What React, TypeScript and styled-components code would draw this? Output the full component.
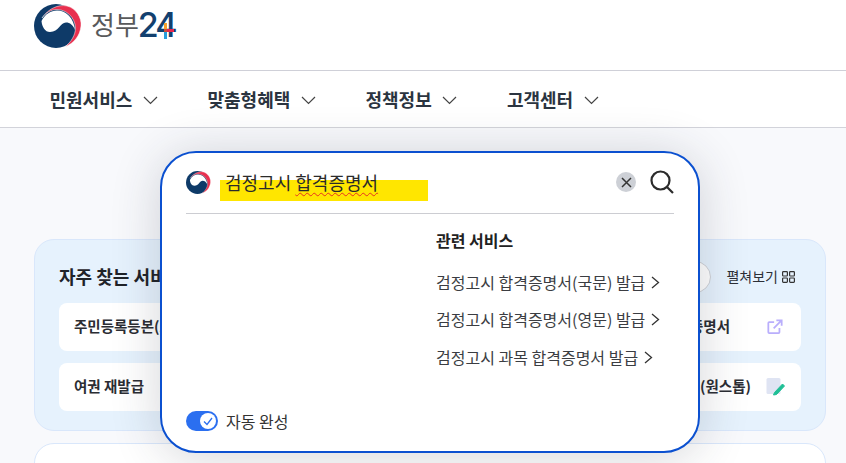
import React from 'react';
import styled, { createGlobalStyle } from 'styled-components';

const FONT = `"Noto Sans CJK KR", "Noto Sans", sans-serif`;

const GlobalStyle = createGlobalStyle`
  html, body {
    margin: 0;
    padding: 0;
    background: #f8f9fc;
    font-family: ${FONT};
    color: #222;
  }
  * { box-sizing: border-box; }
`;

const NAV_ITEMS = ['민원서비스', '맞춤형혜택', '정책정보', '고객센터'];
const RELATED = [
  '검정고시 합격증명서(국문) 발급',
  '검정고시 합격증명서(영문) 발급',
  '검정고시 과목 합격증명서 발급',
];

const Emblem = ({ size }: { size: number }) => (
  <svg width={size} height={size} viewBox="0 0 48 48">
    <circle cx="22" cy="24" r="22" fill="#0e3a68" />
    <path
      d="M7.500 19C11 12 17 8.500 23 8.500C32 8.500 40 16 41 28C39 23 36 20.500 32 20.500C26 20.500 25 30 16 30C11 30 8 25 7.500 19Z"
      fill="#fff"
    />
    <path
      d="M8 16C14 7 24 2 33 4C42 6 48 16 47 24C46 34 40 41 31 45C37 40 41.500 33 41.500 26C41 15 32 7.500 23 7.500C17 7.500 12 10.500 8 16Z"
      fill="#e8304f"
      stroke="#fff"
      strokeWidth="0.5"
    />
  </svg>
);

const Chevron = () => (
  <svg width="15" height="9" viewBox="0 0 15 9" fill="none">
    <path d="M1 1l6.500 6.500L14 1" stroke="#444" strokeWidth="1.200" />
  </svg>
);

const App = () => (
  <Page>
    <GlobalStyle />
    <Header>
      <Logo>
        <Emblem size={48} />
        <LogoKo>정부</LogoKo>
        <LogoNum>
          24
          <PlusMark width="16" height="16" viewBox="0 0 16 16">
            <rect x="6" y="0" width="3" height="7" fill="#f5a02c" />
            <rect x="9" y="6" width="7" height="3" fill="#e8254c" />
            <rect x="6" y="9" width="3" height="7" fill="#2a9fdc" />
            <rect x="6" y="6" width="3" height="3" fill="#c9503c" />
          </PlusMark>
        </LogoNum>
      </Logo>
    </Header>
    <Nav>
      {NAV_ITEMS.map((item) => (
        <NavItem key={item}>
          {item}
          <Chevron />
        </NavItem>
      ))}
    </Nav>
    <Main>
      <FavCard>
        <FavHead>
          <FavTitle>자주 찾는 서비스</FavTitle>
          <FavTools>
            <Pill />
            <ExpandLabel>
              <ExpandText>펼쳐보기</ExpandText>
              <svg width="13" height="12" viewBox="0 0 13 12" fill="none" stroke="#333" strokeWidth="1.200">
                <rect x="0.600" y="0.600" width="4.800" height="4.400" rx="0.800" />
                <rect x="7.600" y="0.600" width="4.800" height="4.400" rx="0.800" />
                <rect x="0.600" y="7" width="4.800" height="4.400" rx="0.800" />
                <rect x="7.600" y="7" width="4.800" height="4.400" rx="0.800" />
              </svg>
            </ExpandLabel>
          </FavTools>
        </FavHead>
        <FavGrid>
          <FavItem>
            <FavLabel>주민등록등본(초본)</FavLabel>
          </FavItem>
          <FavItem>
            <FavLabel>건강보험 자격득실</FavLabel>
          </FavItem>
          <FavItem>
            <FavLabel>건강보험 자격득실 증명서</FavLabel>
            <svg width="16" height="16" viewBox="0 0 18 18" fill="none" stroke="#b9aefc" strokeWidth="2">
              <path d="M8 3.500H2.500a1 1 0 0 0-1 1V15a1 1 0 0 0 1 1h10.500a1 1 0 0 0 1-1V10" />
              <path d="M7.500 10.500L15.500 2.500M10.500 1.500h6v6" />
            </svg>
          </FavItem>
          <FavItem>
            <FavLabel>여권 재발급</FavLabel>
          </FavItem>
          <FavItem>
            <FavLabel>운전면허증 재발급</FavLabel>
          </FavItem>
          <FavItem>
            <FavLabel>주민등록전입신고서 (원스톱)</FavLabel>
            <PencilIcon width="19" height="18" viewBox="0 0 19 18">
              <rect x="0.500" y="0" width="14" height="16" rx="1.500" fill="#dfe4f3" />
              <path d="M8.500 14.500l8-8.500 2 2-8 8.500-3 .5Z" fill="#1fbf95" stroke="#1fbf95" strokeWidth="1" />
            </PencilIcon>
          </FavItem>
        </FavGrid>
      </FavCard>
      <NextCard />
      <SearchPanel>
        <SearchRow>
          <Emblem size={25} />
          <SearchField>
            <Highlight />
            <QueryText>
              검정고시 <Misspelled>합격증명서</Misspelled>
            </QueryText>
          </SearchField>
          <ClearButton>
            <svg width="11" height="11" viewBox="0 0 11 11">
              <path d="M1 1l9 9M10 1l-9 9" stroke="#333" strokeWidth="1.500" />
            </svg>
          </ClearButton>
          <svg width="24" height="24" viewBox="0 0 24 24" fill="none" stroke="#2b2b2b" strokeWidth="2.200">
            <circle cx="10.500" cy="10.500" r="9" />
            <path d="M17 17l6 6" />
          </svg>
        </SearchRow>
        <RelatedColumn>
          <RelatedTitle>관련 서비스</RelatedTitle>
          {RELATED.map((item) => (
            <RelatedLink key={item}>
              {item}
              <svg width="9" height="13" viewBox="0 0 9 13" fill="none">
                <path d="M1 1l6.500 5.500L1 12" stroke="#333" strokeWidth="1.300" />
              </svg>
            </RelatedLink>
          ))}
        </RelatedColumn>
        <PanelFooter>
          <Toggle>
            <ToggleKnob>
              <svg width="10" height="9" viewBox="0 0 10 9" fill="none">
                <path d="M1 4.500l3 3 5-6.500" stroke="#2b6ff0" strokeWidth="1.300" />
              </svg>
            </ToggleKnob>
          </Toggle>
          자동 완성
        </PanelFooter>
      </SearchPanel>
    </Main>
  </Page>
);

export default App;

const Page = styled.div`
  width: 846px;
  height: 463px;
  overflow: hidden;
  background: #f8f9fc;
`;
const Header = styled.header`
  height: 71px;
  background: #fff;
  border-bottom: 1px solid #cfd0d8;
  padding: 2px 0 0 34px;
`;
const Logo = styled.div`
  display: flex;
  align-items: flex-start;
`;
const LogoKo = styled.span`
  margin: 4px 0 0 9px;
  font-size: 26px;
  line-height: 36px;
  color: #58595b;
`;
const LogoNum = styled.span`
  position: relative;
  margin: 3px 0 0 -1px;
  font-family: 'Inter', sans-serif;
  font-size: 34px;
  font-weight: 500;
  line-height: 40px;
  letter-spacing: -3px;
  color: #12406f;
`;
const PlusMark = styled.svg`
  position: absolute;
  left: 20px;
  top: 18px;
`;
const Nav = styled.nav`
  height: 57px;
  background: #fff;
  border-bottom: 1px solid #d2d3da;
  padding: 0 0 0 49.500px;
  display: flex;
  align-items: center;
  gap: 49.600px;
`;
const NavItem = styled.div`
  display: flex;
  align-items: center;
  gap: 10.600px;
  font-size: 18px;
  font-weight: 700;
  color: #2b3440;
  svg {
    margin-top: 2px;
  }
`;
const Main = styled.main`
  position: relative;
  padding: 111px 20px 0 34px;
`;
const FavCard = styled.section`
  height: 192px;
  padding: 21px 24px 0;
  background: #e6f2fd;
  border: 1px solid #d9e7fb;
  border-radius: 20px;
`;
const FavHead = styled.div`
  height: 32px;
  display: flex;
  align-items: center;
  justify-content: space-between;
`;
const FavTitle = styled.h2`
  margin: 0 0 2px;
  font-size: 18px;
  font-weight: 700;
  color: #1f2329;
`;
const FavTools = styled.div`
  display: flex;
  align-items: center;
  gap: 15px;
  padding-right: 6px;
`;
const Pill = styled.div`
  width: 60px;
  height: 32px;
  background: #fff;
  border: 1px solid #cfd2d8;
  border-radius: 16px;
`;
const ExpandLabel = styled.div`
  display: flex;
  align-items: center;
  gap: 4px;
  font-size: 14px;
  color: #2c2f36;
`;
const ExpandText = styled.span`
  margin-bottom: 2px;
`;
const FavGrid = styled.div`
  margin-top: 10px;
  display: grid;
  grid-template-columns: repeat(3, 1fr);
  gap: 12px;
`;
const FavItem = styled.div`
  height: 48px;
  padding: 0 18px 0 15px;
  display: flex;
  align-items: center;
  justify-content: space-between;
  background: #fff;
  border-radius: 8px;
`;
const FavLabel = styled.span`
  margin-bottom: 4px;
  font-size: 14.500px;
  font-weight: 700;
  color: #2b2d33;
`;
const PencilIcon = styled.svg`
  margin-right: -2px;
`;
const NextCard = styled.section`
  height: 60px;
  margin-top: 12px;
  background: #fff;
  border: 1px solid #d9e7fb;
  border-radius: 20px;
`;
const SearchPanel = styled.div`
  position: absolute;
  left: 160px;
  top: 23px;
  width: 540px;
  height: 302px;
  padding: 0 24px;
  display: flex;
  flex-direction: column;
  background: #fff;
  border: 2px solid #0b50d0;
  border-radius: 36px;
  box-shadow: 0 4px 50px rgba(40, 45, 60, 0.2);
`;
const SearchRow = styled.div`
  height: 61px;
  flex: none;
  display: flex;
  align-items: center;
  border-bottom: 1px solid #cccdd2;
  padding-bottom: 2px;
`;
const SearchField = styled.div`
  position: relative;
  flex: 1;
  height: 24px;
  margin-left: 14px;
`;
const Highlight = styled.div`
  position: absolute;
  left: -5px;
  top: 10px;
  width: 208px;
  height: 21px;
  background: #ffe600;
`;
const QueryText = styled.div`
  position: relative;
  font-size: 18px;
  line-height: 24px;
  color: #2b2b2b;
`;
const Misspelled = styled.span`
  text-decoration: underline wavy #e8321e 1px;
  text-underline-offset: 2px;
`;
const ClearButton = styled.div`
  width: 20px;
  height: 20px;
  margin-right: 14px;
  display: flex;
  align-items: center;
  justify-content: center;
  background: #cdd0d6;
  border-radius: 50%;
`;
const RelatedColumn = styled.div`
  margin: 15px 0 0 250px;
  display: flex;
  flex-direction: column;
  gap: 14.500px;
`;
const RelatedTitle = styled.div`
  font-size: 16px;
  font-weight: 700;
  line-height: 23px;
  margin-bottom: 4px;
  color: #222;
`;
const RelatedLink = styled.div`
  display: flex;
  align-items: center;
  gap: 6px;
  font-size: 16px;
  line-height: 23px;
  color: #3b3d42;
`;
const PanelFooter = styled.div`
  margin-top: auto;
  margin-bottom: 18px;
  display: flex;
  align-items: center;
  gap: 8px;
  font-size: 16px;
  color: #333;
`;
const Toggle = styled.div`
  width: 32px;
  height: 20px;
  padding: 2px;
  display: flex;
  justify-content: flex-end;
  background: #2b6ff0;
  border-radius: 10px;
`;
const ToggleKnob = styled.div`
  width: 16px;
  height: 16px;
  display: flex;
  align-items: center;
  justify-content: center;
  background: #fff;
  border-radius: 50%;
`;
